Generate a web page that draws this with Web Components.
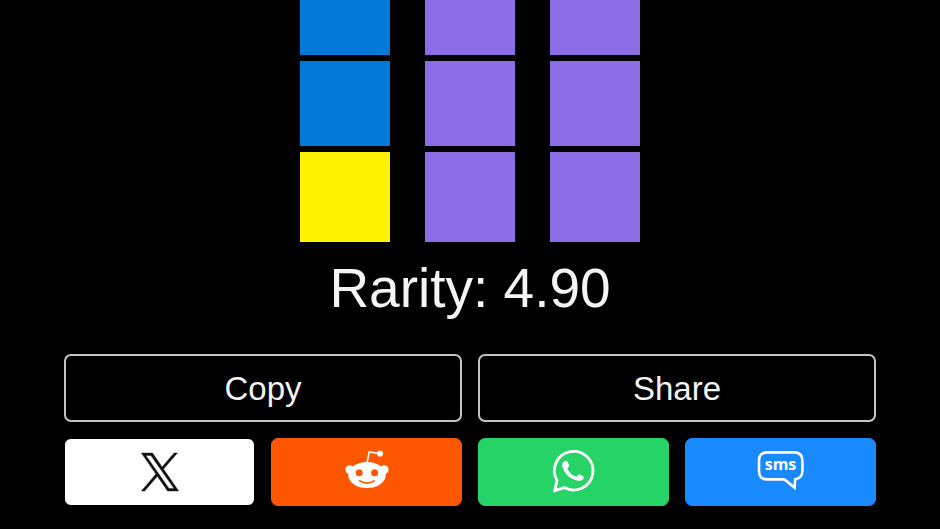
<!DOCTYPE html>
<html lang="en">
<head>
  <meta charset="utf-8">
  <meta name="viewport" content="width=device-width, initial-scale=1">
  <title>Results</title>
  <style>
    body {
      margin: 0;
      background: #000;
      color: #f4f4f4;
      font-family: "Liberation Sans", Arial, sans-serif;
    }
  </style>
</head>
<body>
  <result-summary rarity="4.90">
    <result-grid slot="grid" tiles="blue purple purple blue purple purple yellow purple purple"></result-grid>
    <action-button>Copy</action-button>
    <action-button>Share</action-button>
    <share-link slot="links" href="#x" label="Share on X" style="--fill: #fff; --edge: #000">
      <svg width="44" height="38" viewBox="0 0 1200 1227" fill="#111" stroke="#111" stroke-width="14">
        <path d="M714.163 519.284L1160.89 0H1055.03L667.137 450.887L357.328 0H0L468.492 681.821L0 1226.37H105.866L515.491 750.218L842.672 1226.37H1200L714.137 519.284H714.163ZM569.165 687.828L521.697 619.934L144.011 79.6944H306.615L611.412 515.685L658.88 583.579L1055.08 1150.3H892.476L569.165 687.854V687.828Z"/>
      </svg>
    </share-link>
    <share-link slot="links" href="#reddit" label="Share on Reddit" style="--fill: #ff5700">
      <svg width="44" height="44" viewBox="0 2 44 44" fill="#fff">
        <circle cx="4.8" cy="21.6" r="4.4"/>
        <circle cx="39.2" cy="21.6" r="4.4"/>
        <ellipse cx="22" cy="27" rx="18.7" ry="13.1"/>
        <path d="M22 15L24.2 3.9L34 5.5" fill="none" stroke="#fff" stroke-width="1.6" stroke-linejoin="round"/>
        <circle cx="35" cy="5.5" r="3.1"/>
        <g fill="#ff5700">
          <circle cx="14.2" cy="24.7" r="3.5"/>
          <circle cx="29.6" cy="24.7" r="3.5"/>
        </g>
        <path d="M14.6 32.8Q22 37.4 29.2 32.8" fill="none" stroke="#ff5700" stroke-width="1.6" stroke-linecap="round"/>
      </svg>
    </share-link>
    <share-link slot="links" href="#whatsapp" label="Share on WhatsApp" style="--fill: #25d366">
      <svg width="44" height="44" viewBox="0 1 44 44" fill="#fff">
        <path d="M5 31.4A19.3 19.3 0 1 1 12.4 38.6L2.8 41.6Z" fill="none" stroke="#fff" stroke-width="2.8"/>
        <path d="M12.8 12C10.4 13.2 9.8 15.6 10.6 18.2C12.8 25.2 19.2 31 26.4 31.8C29.6 32 32 30 31.6 27.4L27.2 25L24.2 27.8C20.2 26.2 16.8 23 15.2 19.4L17.4 17L15.6 12.4C15 11.6 13.8 11.5 12.8 12Z"/>
      </svg>
    </share-link>
    <share-link slot="links" href="#sms" label="Share by SMS" style="--fill: #1889ff">
      <svg width="48" height="44" viewBox="0 0 48 44" fill="#fff">
        <path d="M10 2.4H37Q45.4 2.4 45.4 10.8V21Q45.4 28 38.2 29.4L37.6 37.6L27.4 29.4H10Q2 29.4 2 21V10.8Q2 2.4 10 2.4Z" fill="none" stroke="#fff" stroke-width="2.6"/>
        <text x="23.5" y="20" text-anchor="middle" font-family="Open Sans, Noto Sans, sans-serif" font-size="16" font-weight="700">sms</text>
      </svg>
    </share-link>
  </result-summary>

  <script>
    /**
     * Create a template from a string of markup.
     *
     * @param {string} markup - Styles and markup of the element.
     * @returns {HTMLTemplateElement} The template.
     */
    function createTemplate (markup) {
      const template = document.createElement('template')
      template.innerHTML = markup
      return template
    }

    const gridTemplate = createTemplate(`
      <style>
        :host {
          display: grid;
          grid-template-columns: repeat(3, 90px);
          grid-template-rows: 55px 85px 90px;
          gap: 6px 35px;
          justify-content: center;
        }

        .blue { background: #0079d9; }
        .purple { background: #8a6de4; }
        .yellow { background: #fff200; }
      </style>
    `)

    customElements.define(
      'result-grid',
      /**
       * Grid of coloured tiles, one for each guess.
       *
       */
      class extends HTMLElement {
        constructor () {
          super()

          this.attachShadow({ mode: 'open' }).appendChild(
            gridTemplate.content.cloneNode(true)
          )
        }

        /**
         * Add the tiles named in the tiles-attribute.
         *
         */
        connectedCallback () {
          for (const color of this.getAttribute('tiles').split(' ')) {
            const tile = document.createElement('div')
            tile.className = color
            this.shadowRoot.appendChild(tile)
          }
        }
      }
    )

    const buttonTemplate = createTemplate(`
      <style>
        :host {
          display: block;
        }

        button {
          display: block;
          width: 100%;
          height: 68px;
          padding: 2px 0 0;
          border: 2px solid #c4c4c4;
          border-radius: 7px;
          background: transparent;
          color: inherit;
          font: inherit;
          font-size: 33px;
          cursor: pointer;
        }
      </style>
      <button type="button"><slot></slot></button>
    `)

    customElements.define(
      'action-button',
      /**
       * Outlined button.
       *
       */
      class extends HTMLElement {
        constructor () {
          super()

          this.attachShadow({ mode: 'open' }).appendChild(
            buttonTemplate.content.cloneNode(true)
          )
        }
      }
    )

    const linkTemplate = createTemplate(`
      <style>
        :host {
          display: block;
        }

        a {
          display: flex;
          align-items: center;
          justify-content: center;
          box-sizing: border-box;
          height: 68px;
          border: 1px solid var(--edge, var(--fill));
          border-radius: 7px;
          background: var(--fill);
        }

        ::slotted(svg) {
          overflow: visible;
        }
      </style>
      <a><slot></slot></a>
    `)

    customElements.define(
      'share-link',
      /**
       * Filled link with an icon in its slot.
       *
       */
      class extends HTMLElement {
        constructor () {
          super()

          this.attachShadow({ mode: 'open' }).appendChild(
            linkTemplate.content.cloneNode(true)
          )
        }

        /**
         * Pass the address and the label on to the link.
         *
         */
        connectedCallback () {
          const link = this.shadowRoot.querySelector('a')
          link.href = this.getAttribute('href')
          link.setAttribute('aria-label', this.getAttribute('label'))
        }
      }
    )

    const summaryTemplate = createTemplate(`
      <style>
        :host {
          display: block;
          padding: 0 64px 16px;
        }

        h1 {
          margin: 14px 0 34px;
          font-size: 55px;
          font-weight: 400;
          line-height: 64px;
          text-align: center;
        }

        .row {
          display: grid;
          grid-template-columns: repeat(2, 1fr);
          gap: 16px;
        }

        .links {
          grid-template-columns: repeat(4, 1fr);
          margin-top: 16px;
        }
      </style>
      <slot name="grid"></slot>
      <h1>Rarity: <span id="rarity"></span></h1>
      <div class="row"><slot></slot></div>
      <div class="row links"><slot name="links"></slot></div>
    `)

    customElements.define(
      'result-summary',
      /**
       * Summary of a finished game, with ways to share it.
       *
       */
      class extends HTMLElement {
        constructor () {
          super()

          this.attachShadow({ mode: 'open' }).appendChild(
            summaryTemplate.content.cloneNode(true)
          )
        }

        /**
         * Show the rarity-attribute in the heading.
         *
         */
        connectedCallback () {
          this.shadowRoot.querySelector('#rarity').textContent =
            this.getAttribute('rarity')
        }
      }
    )
  </script>
</body>
</html>
